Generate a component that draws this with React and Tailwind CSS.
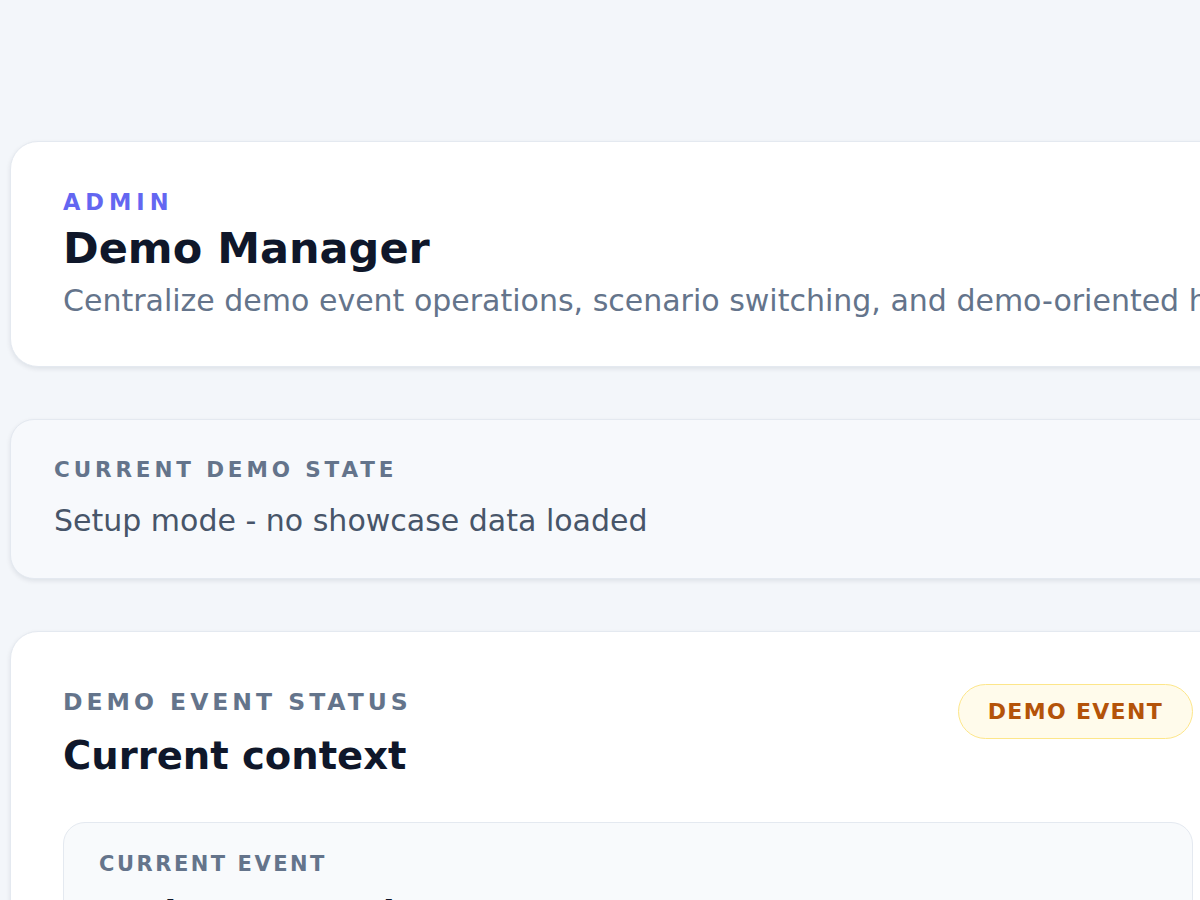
export default function App() {
  return (
    <div className="h-[900px] w-full overflow-hidden bg-[#f3f6fa] font-['DejaVu_Sans',sans-serif]">
      <div className="ml-[10px] flex w-[1236px] flex-col pt-[141px]">
        {/* Header card */}
        <section className="rounded-[28px] border border-[#e4e9f0] bg-white px-[52px] pb-[43px] pt-[45px] shadow-[0_2px_5px_rgba(15,23,42,0.09)]">
          <div className="text-[22.5px] font-bold uppercase leading-[30px] tracking-[0.22em] text-[#6366f1]">
            Admin
          </div>
          <h1 className="mt-[5px] text-[43px] font-bold leading-[52px] text-[#0f172a]">
            Demo Manager
          </h1>
          <p className="mt-[4px] whitespace-nowrap text-[30px] leading-[45px] text-[#64748b]">
            Centralize demo event operations, scenario switching, and demo-oriented helpers.
          </p>
        </section>

        {/* Current demo state */}
        <section className="mt-[52px] rounded-[24px] border border-[#e4e9f0] bg-[#f7f9fc] px-[43px] py-[35px] shadow-[0_2px_5px_rgba(15,23,42,0.09)]">
          <div className="text-[21.5px] font-bold uppercase leading-[30px] tracking-[0.18em] text-[#64748b]">
            Current demo state
          </div>
          <p className="mt-[13px] text-[30px] leading-[45px] text-[#475569]">
            Setup mode - no showcase data loaded
          </p>
        </section>

        {/* Demo event status */}
        <section className="mt-[52px] rounded-[28px] border border-[#e4e9f0] bg-white px-[52px] pb-[52px] pt-[55px] shadow-[0_2px_5px_rgba(15,23,42,0.09)]">
          <div className="flex items-start justify-between">
            <div>
              <div className="text-[23.5px] font-bold uppercase leading-[30px] tracking-[0.17em] text-[#64748b]">
                Demo event status
              </div>
              <h2 className="mt-[13px] text-[38.5px] font-bold leading-[52px] text-[#0f172a]">
                Current context
              </h2>
            </div>
            <span className="-mt-[3px] rounded-full border border-[#fde68a] bg-[#fffbeb] px-[29px] py-[11.5px] text-[22px] font-bold uppercase leading-[30px] tracking-[0.06em] text-[#b45309]">
              Demo event
            </span>
          </div>

          <div className="mt-[40px] rounded-[22px] border border-[#e4e9f0] bg-[#f8fafc] px-[35px] pb-[28px] pt-[26px]">
            <div className="text-[21px] font-bold uppercase leading-[30px] tracking-[0.12em] text-[#64748b]">
              Current event
            </div>
            <div className="mt-[10px] text-[34px] font-bold leading-[48px] text-[#0f172a]">
              Spring Demo Showcase
            </div>
            <p className="mt-[8px] text-[28px] leading-[42px] text-[#64748b]">
              This event is flagged as a demo event.
            </p>
          </div>
        </section>
      </div>
    </div>
  );
}
